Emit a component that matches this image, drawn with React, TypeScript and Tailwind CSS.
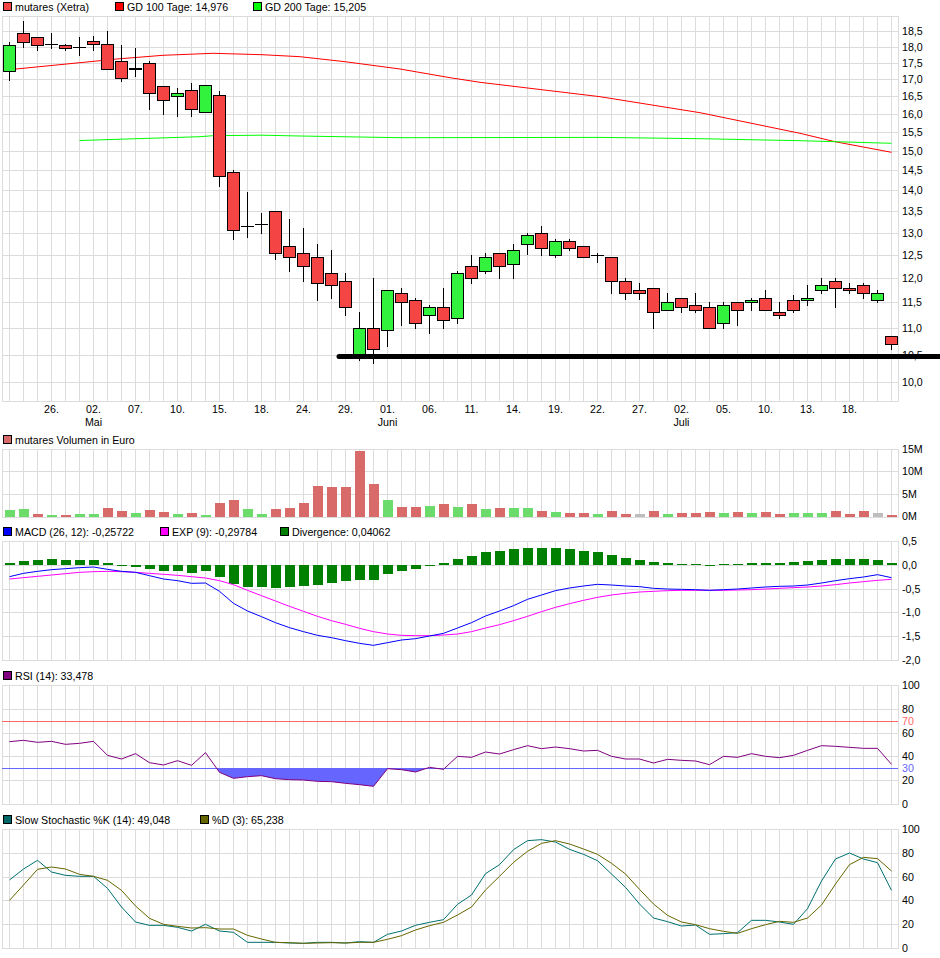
import type { ReactNode } from 'react';

const GRID = '#dcdcdc';
const UP = '#33f23d';
const DOWN = '#f44444';

const slotX = (i: number) => 9.5 + 14 * i;
const slots = Array.from({ length: 64 }, (_, i) => slotX(i));

// readings are taken at 3x, base is the top of that crop
const toY = (base: number, zs: number[]) => zs.map((z) => base + z / 3);

// [slot, kind, body top, body bottom, wick top, wick bottom]
type Candle = [number, 'u' | 'd' | 'n', number, number, number, number];

const CANDLES: Candle[] = [
  [0, 'u', 45, 71, 42, 80], [1, 'd', 33, 42, 21, 47], [2, 'd', 37, 45, 37, 50], [3, 'n', 44, 44, 33, 48],
  [4, 'd', 45, 48, 44, 50], [5, 'n', 47, 47, 37, 55], [6, 'd', 41, 44, 36, 50], [7, 'd', 44, 69, 31, 69],
  [8, 'd', 61, 78, 45, 81], [9, 'u', 68, 69, 48, 76], [10, 'd', 63, 93, 61, 109], [11, 'd', 86, 100, 86, 114],
  [12, 'u', 93, 96, 88, 116], [13, 'd', 90, 109, 83, 116], [14, 'u', 85, 112, 85, 112], [15, 'd', 95, 176, 91, 186],
  [16, 'd', 172, 230, 170, 239], [17, 'n', 226, 226, 192, 237], [18, 'n', 224, 224, 213, 233], [19, 'd', 211, 253, 211, 259],
  [20, 'd', 246, 257, 219, 271], [21, 'd', 253, 266, 228, 281], [22, 'd', 257, 283, 244, 300], [23, 'd', 273, 285, 250, 298],
  [24, 'd', 281, 307, 273, 315], [25, 'u', 328, 356, 312, 360], [26, 'd', 328, 349, 278, 363], [27, 'u', 290, 330, 290, 346],
  [28, 'd', 293, 302, 288, 325], [29, 'd', 300, 323, 298, 328], [30, 'u', 307, 315, 305, 333], [31, 'd', 307, 320, 288, 328],
  [32, 'u', 273, 318, 271, 323], [33, 'd', 266, 278, 255, 283], [34, 'u', 257, 271, 253, 273], [35, 'd', 253, 266, 253, 278],
  [36, 'u', 250, 264, 244, 278], [37, 'u', 235, 244, 233, 254], [38, 'd', 233, 248, 226, 255], [39, 'u', 241, 255, 239, 257],
  [40, 'd', 241, 248, 239, 250], [41, 'd', 246, 257, 246, 257], [42, 'n', 255, 255, 253, 262], [43, 'd', 257, 281, 257, 293],
  [44, 'd', 281, 293, 278, 299], [45, 'd', 290, 293, 283, 299], [46, 'd', 288, 312, 288, 328], [47, 'u', 302, 310, 293, 310],
  [48, 'd', 298, 307, 298, 312], [49, 'd', 305, 310, 293, 312], [50, 'd', 307, 328, 302, 328], [51, 'u', 305, 323, 302, 328],
  [52, 'd', 302, 310, 302, 325], [53, 'u', 300, 302, 298, 310], [54, 'd', 298, 310, 290, 310], [55, 'd', 312, 315, 302, 318],
  [56, 'd', 300, 310, 295, 312], [57, 'u', 298, 300, 285, 305], [58, 'u', 285, 290, 278, 293], [59, 'd', 281, 288, 278, 307],
  [60, 'd', 288, 290, 283, 293], [61, 'd', 285, 293, 283, 298], [62, 'u', 293, 300, 290, 302], [63, 'd', 336, 344, 336, 349],
];

const GD100 = '9,69.5 16,69 100,60.7 113,59.3 163,55.3 213,53.3 262,54.7 300,56.7 345,61.7 400,69 450,77.7 480,82.3 600,96.7 700,112.7 800,133.3 835,141.7 891.5,152.3';
const GD200 = '79.5,140.5 200,136.7 213,135.7 262,135.2 300,136 400,137.7 600,137.4 700,138.7 800,140.7 891.5,143.3';

const PRICE_ROWS = [16, 31, 47, 63, 79, 96, 114, 132, 151, 170, 190, 211, 233, 255, 278, 302, 328, 355, 382, 401];
const PRICE_LABELS: [string, number][] = [
  ['18,5', 31], ['18,0', 47], ['17,5', 63], ['17,0', 79], ['16,5', 96], ['16,0', 114], ['15,5', 132], ['15,0', 151],
  ['14,5', 170], ['14,0', 190], ['13,5', 211], ['13,0', 233], ['12,5', 255], ['12,0', 278], ['11,5', 302], ['11,0', 328],
  ['10,5', 355], ['10,0', 382],
];
const DATES = ['26.', '02.', '07.', '10.', '15.', '18.', '24.', '29.', '01.', '06.', '11.', '14.', '19.', '22.', '27.', '02.', '05.', '10.', '13.', '18.'];
const MONTHS: [string, number][] = [['Mai', 6], ['Juni', 27], ['Juli', 48]];

// volume: [kind, height]
const VOLUME: [string, number][] = [
  ['u', 7], ['u', 8], ['d', 3], ['u', 2], ['d', 2], ['u', 3], ['u', 3], ['d', 9], ['d', 6], ['u', 4], ['d', 7], ['d', 5], ['u', 3], ['d', 4], ['u', 2], ['d', 14],
  ['d', 17], ['u', 8], ['u', 3], ['d', 8], ['d', 9], ['d', 14], ['d', 31], ['d', 30], ['d', 30], ['d', 66], ['d', 33], ['u', 17], ['d', 10], ['d', 10], ['u', 11], ['d', 13],
  ['u', 10], ['d', 13], ['u', 8], ['d', 9], ['u', 9], ['u', 9], ['d', 6], ['u', 5], ['d', 4], ['d', 4], ['u', 3], ['d', 6], ['d', 3], ['g', 3], ['d', 6], ['u', 3],
  ['d', 4], ['d', 4], ['d', 5], ['u', 4], ['d', 5], ['u', 4], ['d', 5], ['d', 3], ['u', 4], ['u', 4], ['u', 4], ['d', 6], ['d', 3], ['d', 6], ['g', 4], ['d', 2],
];
const VOLUME_COLORS: Record<string, string> = { u: '#6bdc6b', d: '#d86a6a', g: '#bdbdbd' };

const DIVERGENCE = [
  399, 393, 390, 387, 390, 390, 390, 399, 405, 411, 417, 423, 423, 429, 423, 441,
  462, 471, 471, 474, 471, 468, 465, 459, 453, 450, 450, 432, 423, 417, 405, 399,
  387, 378, 366, 363, 357, 354, 354, 354, 357, 363, 366, 375, 384, 390, 396, 399,
  402, 402, 405, 402, 402, 399, 399, 399, 396, 393, 390, 387, 387, 387, 390, 399,
];
const MACD = toY(430, [
  440, 430, 424, 419, 416, 413, 411, 418, 424, 427, 437, 447, 452, 460, 459, 484,
  520, 543, 560, 578, 593, 605, 616, 623, 632, 640, 646, 638, 630, 626, 618, 610,
  594, 578, 558, 543, 527, 508, 495, 482, 474, 468, 463, 465, 468, 470, 475, 477,
  478, 479, 481, 479, 477, 474, 471, 469, 468, 465, 459, 452, 446, 441, 434, 443,
]);
const EXP = toY(430, [
  447, 443, 439, 435, 431, 427, 425, 424, 425, 427, 430, 433, 436, 440, 444, 452,
  464, 481, 497, 513, 529, 544, 559, 572, 583, 595, 605, 612, 616, 617, 617, 615,
  612, 605, 594, 584, 572, 559, 545, 532, 521, 511, 502, 495, 490, 486, 484, 482,
  481, 481, 481, 481, 480, 479, 477, 475, 473, 471, 468, 464, 459, 455, 451, 448,
]);
const RSI = toY(665, [
  230, 226, 232, 229, 238, 235, 229, 271, 282, 266, 293, 300, 287, 301, 263, 322,
  340, 335, 332, 341, 344, 345, 349, 350, 355, 359, 364, 311, 314, 321, 307, 313,
  274, 277, 261, 267, 254, 242, 251, 246, 251, 258, 256, 274, 282, 282, 294, 283,
  286, 288, 299, 274, 277, 266, 274, 278, 271, 256, 242, 244, 247, 250, 250, 298,
]);
const STOCH_K = toY(810, [
  210, 177, 151, 186, 196, 199, 199, 235, 291, 336, 346, 346, 352, 363, 343, 363,
  367, 397, 397, 397, 399, 400, 397, 397, 399, 395, 397, 373, 363, 346, 337, 329,
  283, 255, 191, 164, 119, 92, 89, 96, 118, 133, 152, 192, 232, 282, 324, 335,
  348, 345, 373, 371, 368, 331, 331, 336, 343, 296, 213, 147, 129, 147, 158, 241,
]);
const STOCH_D = toY(810, [
  271, 225, 178, 171, 177, 193, 199, 211, 241, 288, 325, 343, 349, 354, 353, 357,
  357, 376, 387, 397, 398, 400, 399, 398, 399, 397, 397, 388, 377, 360, 347, 337,
  315, 291, 240, 199, 157, 124, 100, 92, 102, 117, 133, 160, 192, 238, 282, 316,
  336, 344, 356, 364, 370, 356, 344, 334, 337, 324, 285, 222, 164, 142, 146, 183,
]);

const toPoints = (ys: number[]) => ys.map((y, i) => `${slotX(i)},${y}`).join(' ');

function Swatch({ color }: { color: string }) {
  return <span className="block w-[9px] h-[9px] border border-black shrink-0" style={{ backgroundColor: color }} />;
}

function Legend({ items }: { items: { color: string; label: string; width: number }[] }) {
  return (
    <div className="flex items-center h-[14px] pl-[3px] text-[10.67px] leading-none text-black whitespace-nowrap">
      {items.map((item) => (
        <div key={item.label} className="flex items-center gap-[3px] shrink-0" style={{ width: item.width }}>
          <Swatch color={item.color} />
          <span>{item.label}</span>
        </div>
      ))}
    </div>
  );
}

function Grid({ rows, top, bottom }: { rows: number[]; top: number; bottom: number }) {
  return (
    <g stroke={GRID} strokeWidth={1} shapeRendering="crispEdges">
      {rows.map((r) => (
        <line key={r} x1={2} x2={899} y1={r + 0.5} y2={r + 0.5} />
      ))}
      {[2.5, ...slots, 898.5].map((x) => (
        <line key={x} x1={x} x2={x} y1={top + 0.5} y2={bottom + 0.5} />
      ))}
    </g>
  );
}

function AxisLabels({ labels }: { labels: [string, number, string?][] }) {
  return (
    <g fontSize={10.67} fill="#000">
      {labels.map(([text, y, color]) => (
        <text key={text} x={902} y={y + 4} fill={color}>{text}</text>
      ))}
    </g>
  );
}

function Chart({ top, height, children }: { top: number; height: number; children: ReactNode }) {
  return (
    <svg width={940} height={height} viewBox={`0 ${top} 940 ${height}`} className="block overflow-visible">
      {children}
    </svg>
  );
}

export default function App() {
  return (
    <div className="w-[940px] h-[958px] overflow-hidden bg-white font-['Liberation_Sans',Arial,sans-serif]">
      <Legend
        items={[
          { color: DOWN, label: 'mutares (Xetra)', width: 112 },
          { color: '#ff0000', label: 'GD 100 Tage: 14,976', width: 138 },
          { color: '#00ff00', label: 'GD 200 Tage: 15,205', width: 160 },
        ]}
      />
      <Chart top={14} height={419}>
        <Grid rows={PRICE_ROWS} top={16} bottom={401} />
        <polyline points={GD100} fill="none" stroke="#ff0000" strokeWidth={1} />
        <polyline points={GD200} fill="none" stroke="#00ff00" strokeWidth={1} />
        <g stroke="#000" strokeWidth={1} shapeRendering="crispEdges">
          {CANDLES.map(([i, kind, top, bottom, wickTop, wickBottom]) => (
            <g key={i}>
              <line x1={slotX(i)} x2={slotX(i)} y1={wickTop} y2={wickBottom + 1} />
              {kind === 'n' ? (
                <line x1={slotX(i) - 6.5} x2={slotX(i) + 6.5} y1={top + 0.5} y2={top + 0.5} />
              ) : (
                <rect x={slotX(i) - 6} y={top + 0.5} width={12} height={bottom - top} fill={kind === 'u' ? UP : DOWN} />
              )}
            </g>
          ))}
        </g>
        <AxisLabels labels={PRICE_LABELS} />
        <line x1={339} x2={940} y1={356.5} y2={356.5} stroke="#000" strokeWidth={5} strokeLinecap="round" />
        <g fontSize={10.67} fill="#000" textAnchor="middle">
          {DATES.map((d, n) => (
            <text key={n} x={slotX(3 * n + 3)} y={413}>{d}</text>
          ))}
          {MONTHS.map(([m, n]) => (
            <text key={m} x={slotX(n)} y={426}>{m}</text>
          ))}
        </g>
      </Chart>

      <Legend items={[{ color: '#d86a6a', label: 'mutares Volumen in Euro', width: 200 }]} />
      <Chart top={447} height={78}>
        <Grid rows={[449, 471, 494, 517]} top={449} bottom={517} />
        {VOLUME.map(([kind, h], i) => (
          <rect key={i} x={slotX(i) - 5} y={517 - h} width={10} height={h} fill={VOLUME_COLORS[kind]} shapeRendering="crispEdges" />
        ))}
        <AxisLabels labels={[['15M', 449], ['10M', 471], ['5M', 494], ['0M', 516]]} />
      </Chart>

      <Legend
        items={[
          { color: '#0000ff', label: 'MACD (26, 12): -0,25722', width: 157 },
          { color: '#ff00ff', label: 'EXP (9): -0,29784', width: 120 },
          { color: '#008000', label: 'Divergence: 0,04062', width: 160 },
        ]}
      />
      <Chart top={539} height={130}>
        <Grid rows={[541, 565, 589, 612, 636, 660]} top={541} bottom={660} />
        {DIVERGENCE.map((z, i) => {
          const y = 430 + z / 3;
          const zero = 565.3;
          return (
            <rect key={i} x={slotX(i) - 5} y={Math.min(y, zero)} width={10} height={Math.max(Math.abs(y - zero), 0.6)} fill="#008000" shapeRendering="crispEdges" />
          );
        })}
        <polyline points={toPoints(EXP)} fill="none" stroke="#ff00ff" strokeWidth={1} />
        <polyline points={toPoints(MACD)} fill="none" stroke="#0000ff" strokeWidth={1} />
        <AxisLabels labels={[['0,5', 541], ['0,0', 565], ['-0,5', 589], ['-1,0', 612], ['-1,5', 636], ['-2,0', 660]]} />
      </Chart>

      <Legend items={[{ color: '#800080', label: 'RSI (14): 33,478', width: 200 }]} />
      <Chart top={683} height={130}>
        <Grid rows={[685, 709, 733, 756, 780, 804]} top={685} bottom={804} />
        <defs>
          <clipPath id="rsi-below">
            <rect x={0} y={768.5} width={940} height={50} />
          </clipPath>
        </defs>
        <polygon points={`${toPoints(RSI)} ${slotX(63)},768.5 ${slotX(0)},768.5`} fill="#6666ff" clipPath="url(#rsi-below)" />
        <line x1={2} x2={898} y1={721.5} y2={721.5} stroke="#ff6666" shapeRendering="crispEdges" />
        <line x1={2} x2={898} y1={768.5} y2={768.5} stroke="#6666ff" shapeRendering="crispEdges" />
        <polyline points={toPoints(RSI)} fill="none" stroke="#800080" strokeWidth={1} />
        <AxisLabels
          labels={[['100', 685], ['80', 709], ['70', 721, '#ff6666'], ['60', 733], ['40', 756], ['30', 768, '#6666ff'], ['20', 780], ['0', 804]]}
        />
      </Chart>

      <Legend
        items={[
          { color: '#006666', label: 'Slow Stochastic %K (14): 49,048', width: 197 },
          { color: '#666600', label: '%D (3): 65,238', width: 120 },
        ]}
      />
      <Chart top={827} height={131}>
        <Grid rows={[829, 853, 877, 900, 924, 948]} top={829} bottom={948} />
        <polyline points={toPoints(STOCH_K)} fill="none" stroke="#007070" strokeWidth={1} />
        <polyline points={toPoints(STOCH_D)} fill="none" stroke="#666600" strokeWidth={1} />
        <AxisLabels labels={[['100', 829], ['80', 853], ['60', 877], ['40', 900], ['20', 924], ['0', 948]]} />
      </Chart>
    </div>
  );
}
